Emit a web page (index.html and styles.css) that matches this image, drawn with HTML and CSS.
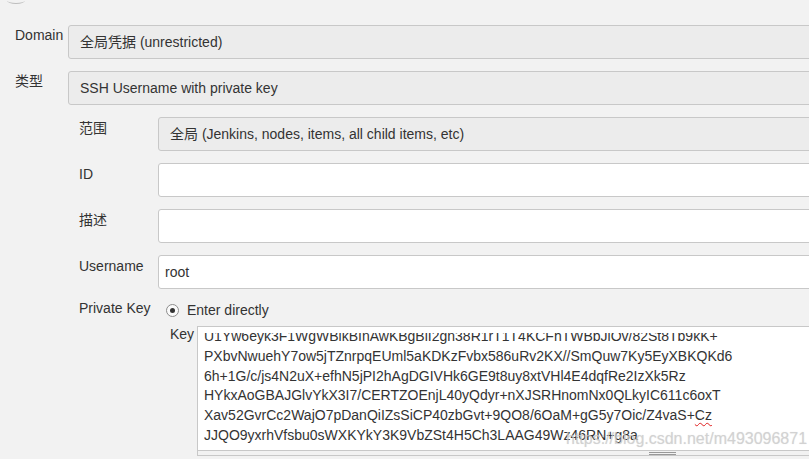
FILE: index.html
```html
<!DOCTYPE html>
<html lang="zh">
<head>
    <meta charset="UTF-8">
    <title>凭据</title>
    <link rel="stylesheet" href="styles.css">
</head>
<body>
    <div class="nub"></div>
    <div class="form">
        <div class="row">
            <div class="label">Domain</div>
            <div class="select">全局凭据 (unrestricted)</div>
        </div>
        <div class="row">
            <div class="label">类型</div>
            <div class="select">SSH Username with private key</div>
        </div>

        <div class="sub">
            <div class="row">
                <div class="label">范围</div>
                <div class="select">全局 (Jenkins, nodes, items, all child items, etc)</div>
            </div>
            <div class="row">
                <div class="label">ID</div>
                <div class="input"></div>
            </div>
            <div class="row">
                <div class="label">描述</div>
                <div class="input"></div>
            </div>
            <div class="row">
                <div class="label">Username</div>
                <div class="input">root</div>
            </div>
            <div class="row row-key">
                <div class="label">Private Key</div>
                <div class="key-box">
                    <div class="radio-line">
                        <span class="radio"></span>
                        <span>Enter directly</span>
                    </div>
                    <div class="key-row">
                        <div class="key-label">Key</div>
                        <div class="textarea-wrap">
                            <div class="textarea">
                                <div class="viewport">
                                    <div class="lines">
                                        <div>U1Yw6eyk3F1WgWBlkBInAwKBgBiI2gn38R1rT1T4KCFhTWBbJlOv/82St8Tb9kK+</div>
                                        <div>PXbvNwuehY7ow5jTZnrpqEUml5aKDKzFvbx586uRv2KX//SmQuw7Ky5EyXBKQKd6</div>
                                        <div>6h+1G/c/js4N2uX+efhN5jPI2hAgDGIVHk6GE9t8uy8xtVHl4E4dqfRe2IzXk5Rz</div>
                                        <div>HYkxAoGBAJGlvYkX3I7/CERTZOEnjL40yQdyr+nXJSRHnomNx0QLkyIC611c6oxT</div>
                                        <div>Xav52GvrCc2WajO7pDanQiIZsSiCP40zbGvt+9QO8/6OaM+gG5y7Oic/Z4vaS+<span class="typo">Cz</span></div>
                                        <div>JJQO9yxrhVfsbu0sWXKYkY3K9VbZSt4H5Ch3LAAG49Wz46RN+g8a</div>
                                    </div>
                                </div>
                            </div>
                            <div class="grip"><span></span></div>
                        </div>
                    </div>
                </div>
            </div>
        </div>
    </div>
    <div class="watermark">https://blog.csdn.net/m493096871</div>
</body>
</html>
```

FILE: styles.css
```css
body {
    margin: 0;
    background: #f2f2f2;
    font-family: 'Liberation Sans', Arial, 'Noto Sans CJK SC', sans-serif;
    font-size: 14px;
    color: #333;
    overflow: hidden;
    height: 459px;
    position: relative;
}
.nub {
    width: 18px;
    height: 6px;
    margin: -3px 0 0 7px;
    border-bottom: 1px solid #bdbdbd;
    border-radius: 50%;
}
.form {
    padding: 21px 0 0 15px;
}
.row {
    display: flex;
    margin-bottom: 12px;
}
.label {
    width: 53px;
    flex: none;
    padding-top: 2px;
    line-height: 17px;
}
.select,
.input {
    width: 1100px;
    flex: none;
    height: 32px;
    line-height: 32px;
    border: 1px solid #c8c8c8;
    border-radius: 3px;
    box-sizing: content-box;
}
.select {
    background: #ececec;
    padding-left: 11px;
}
.input {
    background: #fff;
    padding-left: 6px;
}
.sub {
    margin-top: 1px;
    padding-left: 64px;
}
.sub .label {
    width: 79px;
    padding-top: 3px;
}
.row-key {
    margin-top: -4px;
}
.key-box {
    padding-left: 8px;
}
.radio-line {
    display: flex;
    align-items: center;
    height: 26px;
    gap: 8px;
}
.radio {
    width: 11px;
    height: 11px;
    border: 1px solid #8c8c8c;
    border-radius: 50%;
    background: #fafafa;
    display: flex;
    align-items: center;
    justify-content: center;
}
.radio::after {
    content: '';
    width: 5px;
    height: 5px;
    border-radius: 50%;
    background: #333;
}
.key-row {
    display: flex;
    margin-top: 3px;
    padding-left: 4px;
}
.key-label {
    width: 27px;
    line-height: 17px;
}
.textarea-wrap {
    width: 930px;
}
.textarea {
    height: 117px;
    border: 1px solid #c8c8c8;
    background: #fff;
    padding: 6px 0 0 6px;
    box-sizing: content-box;
}
.viewport {
    height: 117px;
    overflow: hidden;
}
.lines {
    margin-top: -6px;
    line-height: 19.8px;
    white-space: nowrap;
}
.typo {
    text-decoration: underline wavy #e02020;
    text-decoration-thickness: 1px;
    text-underline-offset: 2px;
}
.grip {
    height: 4px;
    border: 1px solid #c8c8c8;
    border-top: none;
    display: flex;
    justify-content: center;
    align-items: center;
}
.grip span {
    width: 27px;
    height: 1px;
    border-top: 1px solid #999;
    border-bottom: 1px solid #999;
}
.watermark {
    position: absolute;
    left: 566px;
    top: 430px;
    font-size: 16px;
    line-height: 18px;
    color: rgba(205, 205, 205, 0.8);
    text-shadow: 0 0 1px rgba(180, 180, 180, 0.4);
}
```
